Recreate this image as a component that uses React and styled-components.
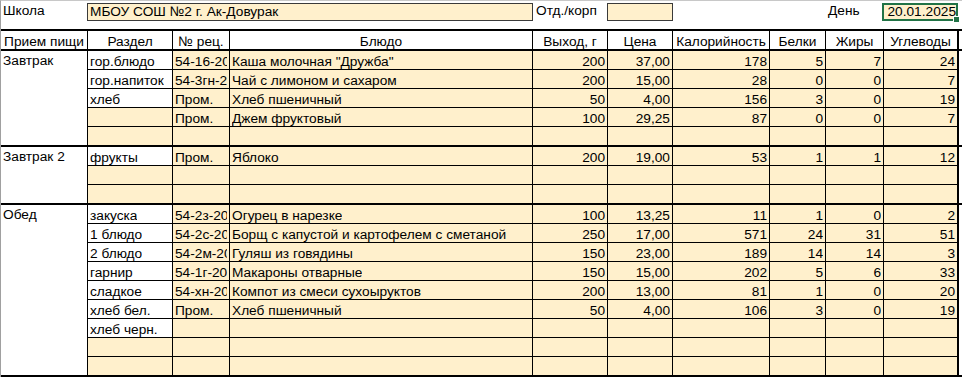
import React from 'react'
import styled, { createGlobalStyle } from 'styled-components'

const COLS = '87px 85px 57px 303px 75px 65px 97px 56px 58px 75px'
const FILL = '#fff0cc'

const GlobalStyle = createGlobalStyle`
  html, body {
    margin: 0;
    background: #fff;
  }
  body {
    font-family: "Liberation Sans", Arial, sans-serif;
    font-size: 13.7px;
    color: #000;
  }
`

const Sheet = styled.div`
  width: 961px;
  height: 377px;
  border-top: 1px solid #c8c8c8;
  border-left: 1px solid #a0a0a0;
  overflow: hidden;
`

const TopBar = styled.div`
  display: grid;
  grid-template-columns: ${COLS};
  height: 28px;
  align-items: start;
`

const Label = styled.div`
  height: 18px;
  margin-top: 2px;
  padding-left: ${p => p.$pad || 2}px;
  line-height: 16px;
  white-space: nowrap;
`

const InfoBox = styled.div`
  grid-column: ${p => p.$span};
  height: 18px;
  margin-top: 2px;
  margin-left: -1px;
  box-sizing: border-box;
  border: 1px solid #3a3a3a;
  background: ${FILL};
  padding-left: 2px;
  line-height: 15px;
  white-space: nowrap;
`

const DateBox = styled.div`
  position: relative;
  height: 18px;
  margin-top: 2px;
  margin-left: -2px;
  margin-right: 1px;
  box-sizing: border-box;
  border: 2px solid #217346;
  background: ${FILL};
  text-align: right;
  line-height: 14px;
`

const Handle = styled.span`
  position: absolute;
  right: -4px;
  bottom: -4px;
  width: 5px;
  height: 5px;
  background: #217346;
  border: 1px solid #fff;
`

const Table = styled.div`
  border-top: 2px solid #000;
`

const HeaderRow = styled.div`
  display: grid;
  grid-template-columns: ${COLS};
  height: 20px;
  box-sizing: border-box;
  border-bottom: 2px solid #000;
`

const HeaderCell = styled.div`
  box-sizing: border-box;
  border-right: ${p => (p.$edge ? 2 : 1)}px solid #000;
  display: flex;
  align-items: flex-end;
  justify-content: center;
  line-height: 15px;
  white-space: nowrap;
  overflow: hidden;
`

const Group = styled.div`
  display: grid;
  grid-template-columns: ${COLS};
  grid-template-rows: repeat(${p => p.$rows - 1}, 19px) 18px;
  border-bottom: 2px solid #000;
`

const MealCell = styled.div`
  grid-row: 1 / span ${p => p.$rows};
  box-sizing: border-box;
  border-right: 1px solid #000;
  padding: 2px 2px 0;
  line-height: 15px;
  white-space: nowrap;
`

const Cell = styled.div`
  box-sizing: border-box;
  border-right: ${p => (p.$edge ? 2 : 1)}px solid #000;
  border-bottom: ${p => (p.$last ? 'none' : '1px solid #000')};
  background: ${p => (p.$fill ? FILL : '#fff')};
  display: flex;
  align-items: flex-end;
  justify-content: ${p => (p.$num ? 'flex-end' : 'flex-start')};
  padding: 0 2px;
  line-height: 15px;
  white-space: nowrap;
  overflow: hidden;
`

const Text = styled.span`
  min-width: 0;
  overflow: hidden;
  text-overflow: clip;
`

const headers = [
  'Прием пищи', 'Раздел', '№ рец.', 'Блюдо', 'Выход, г',
  'Цена', 'Калорийность', 'Белки', 'Жиры', 'Углеводы',
]

const groups = [
  {
    meal: 'Завтрак',
    rows: [
      ['гор.блюдо', '54-16-2020', 'Каша молочная "Дружба"', '200', '37,00', '178', '5', '7', '24'],
      ['гор.напиток', '54-3гн-2020', 'Чай с лимоном и сахаром', '200', '15,00', '28', '0', '0', '7'],
      ['хлеб', 'Пром.', 'Хлеб пшеничный', '50', '4,00', '156', '3', '0', '19'],
      ['', 'Пром.', 'Джем фруктовый', '100', '29,25', '87', '0', '0', '7'],
      [],
    ],
  },
  {
    meal: 'Завтрак 2',
    rows: [
      ['фрукты', 'Пром.', 'Яблоко', '200', '19,00', '53', '1', '1', '12'],
      [],
      [],
    ],
  },
  {
    meal: 'Обед',
    rows: [
      ['закуска', '54-2з-2020', 'Огурец в нарезке', '100', '13,25', '11', '1', '0', '2'],
      ['1 блюдо', '54-2с-2020', 'Борщ с капустой и картофелем с сметаной', '250', '17,00', '571', '24', '31', '51'],
      ['2 блюдо', '54-2м-2020', 'Гуляш из говядины', '150', '23,00', '189', '14', '14', '3'],
      ['гарнир', '54-1г-2020', 'Макароны отварные', '150', '15,00', '202', '5', '6', '33'],
      ['сладкое', '54-хн-2020', 'Компот из смеси сухоыруктов', '200', '13,00', '81', '1', '0', '20'],
      ['хлеб бел.', 'Пром.', 'Хлеб пшеничный', '50', '4,00', '106', '3', '0', '19'],
      ['хлеб черн.'],
      [],
      [],
    ],
  },
]

const MenuGroup = ({ meal, rows }) => (
  <Group $rows={rows.length}>
    <MealCell $rows={rows.length}>{meal}</MealCell>
    {rows.map((row, r) =>
      Array.from({ length: 9 }, (_, c) => {
        const value = row[c] || ''
        const last = r === rows.length - 1
        return (
          <Cell
            key={`${r}-${c}`}
            $last={last}
            $edge={c === 8}
            $num={c >= 3}
            $fill={c > 0 || !value}
          >
            {value && <Text>{value}</Text>}
          </Cell>
        )
      })
    )}
  </Group>
)

const App = () => {
  return (
    <>
      <GlobalStyle />
      <Sheet>
        <TopBar>
          <Label>Школа</Label>
          <InfoBox $span="2 / span 3">МБОУ СОШ №2 г. Ак-Довурак</InfoBox>
          <Label $pad={3}>Отд./корп</Label>
          <InfoBox $span="6 / span 1" />
          <div />
          <div />
          <Label>День</Label>
          <DateBox>
            20.01.2025
            <Handle />
          </DateBox>
        </TopBar>
        <Table>
          <HeaderRow>
            {headers.map((h, i) => (
              <HeaderCell key={h} $edge={i === 9}>{h}</HeaderCell>
            ))}
          </HeaderRow>
          {groups.map(g => (
            <MenuGroup key={g.meal} meal={g.meal} rows={g.rows} />
          ))}
        </Table>
      </Sheet>
    </>
  )
}

export default App
